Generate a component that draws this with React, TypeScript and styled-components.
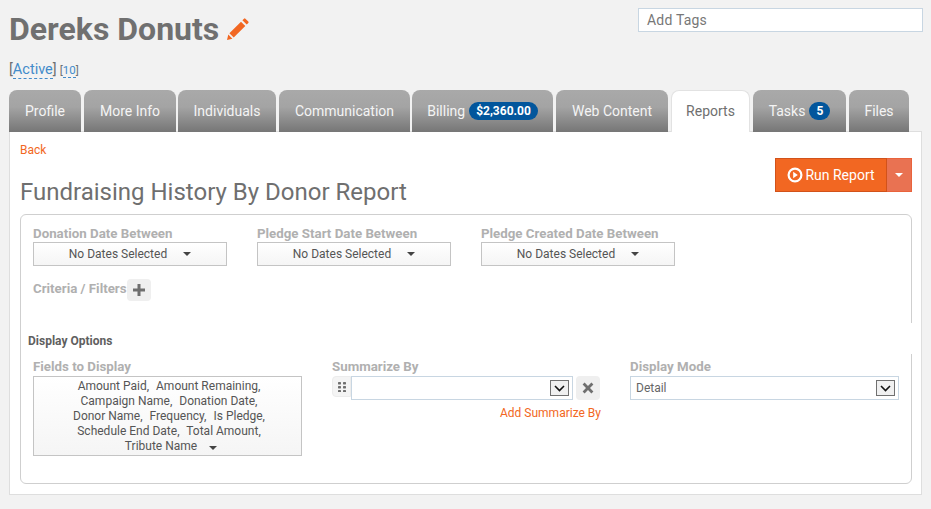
import React from 'react';
import styled, {createGlobalStyle} from 'styled-components';

const GlobalStyle = createGlobalStyle`
    html, body {
        margin: 0;
        height: 100%;
        background: #f2f2f2;
        font-family: Roboto, "Liberation Sans", sans-serif;
        color: #6f6f6f;
        overflow: hidden;
    }
    * {
        box-sizing: border-box;
    }
`;

const Page = styled.div`
    width: 931px;
    height: 509px;
    padding: 0 9px;
`;

const Header = styled.div`
    display: flex;
    justify-content: space-between;
    align-items: flex-start;
    width: 914px;
    height: 90px;
`;

const TitleBlock = styled.div`
    display: flex;
    flex-direction: column;
`;

const TitleRow = styled.div`
    display: flex;
    align-items: center;
    gap: 8px;
    margin-top: 11px;
    height: 36px;
`;

const Title = styled.h1`
    margin: 0;
    font-size: 32px;
    line-height: 36px;
    font-weight: 700;
    color: #707070;
`;

const StatusRow = styled.div`
    margin-top: 14px;
    line-height: 18px;
    color: #6f6f6f;
    display: flex;
    align-items: baseline;
    gap: 3px;
`;

const StatusLink = styled.span<{$small?: boolean}>`
    color: #428bca;
    font-size: ${p => p.$small ? "11.5px" : "14.5px"};
    border-bottom: 1px dashed #428bca;
`;

const Bracketed = styled.span<{$small?: boolean}>`
    font-size: ${p => p.$small ? "11.5px" : "14.5px"};
`;

const TagInput = styled.div`
    width: 285px;
    height: 24px;
    margin-top: 8px;
    padding-left: 8px;
    background: #fff;
    border: 1px solid #c8d6e2;
    font-size: 14px;
    line-height: 22px;
    letter-spacing: 0.2px;
    color: #777;
`;

const TabBar = styled.div`
    display: flex;
    height: 42px;
`;

const Tab = styled.div<{$active?: boolean; $width: number; $gap: number}>`
    width: ${p => p.$width}px;
    margin-right: ${p => p.$gap}px;
    display: flex;
    align-items: center;
    justify-content: center;
    gap: 4px;
    padding-bottom: 1px;
    font-size: 14px;
    border-radius: 8px 8px 0 0;
    color: ${p => p.$active ? "#6f6f6f" : "#f4f4f4"};
    background: ${p => p.$active ? "#fff" : "linear-gradient(#a9a9a9 0%, #a4a4a4 40%, #767676 100%)"};
    ${p => p.$active && `
        border: 1px solid #e2e2e2;
        border-bottom: none;
        position: relative;
        z-index: 1;
    `}
`;

const Badge = styled.span`
    background: #02569c;
    color: #fff;
    font-size: 12px;
    font-weight: 700;
    line-height: 18px;
    height: 18px;
    border-radius: 9px;
    padding: 0 7px;
`;

const Panel = styled.div`
    width: 913px;
    height: 364px;
    margin-top: -1px;
    background: #fff;
    border: 1px solid #dedede;
    padding: 11px 9px 0 10px;
`;

const BackLink = styled.div`
    font-size: 12px;
    line-height: 14px;
    color: #f26722;
`;

const TitleLine = styled.div`
    display: flex;
    justify-content: space-between;
    align-items: flex-start;
    height: 57px;
`;

const ReportTitle = styled.h2`
    margin: 20px 0 0 0;
    font-size: 24px;
    line-height: 30px;
    font-weight: 400;
    color: #6f6f6f;
`;

const SplitButton = styled.div`
    display: flex;
    height: 34px;
    margin-top: 1px;
`;

const RunButton = styled.div`
    width: 112px;
    background: #f26722;
    border: 1px solid #d2521a;
    color: #fff;
    font-size: 14px;
    display: flex;
    align-items: center;
    justify-content: center;
    gap: 2px;
`;

const CaretButton = styled.div`
    width: 25px;
    background: #e97252;
    border: 1px solid #e9633c;
    border-left: none;
    display: flex;
    align-items: center;
    justify-content: center;
`;

const Caret = styled.span<{$color?: string}>`
    display: inline-block;
    width: 0;
    height: 0;
    border-left: 4px solid transparent;
    border-right: 4px solid transparent;
    border-top: 4px solid ${p => p.$color || "#444"};
`;

const OptionsCard = styled.div`
    height: 270px;
    border: 1px solid #cfcfcf;
    border-radius: 6px;
    padding-top: 11px;
    display: flex;
    flex-direction: column;
`;

const DateRow = styled.div`
    display: flex;
    gap: 30px;
    padding-left: 12px;
`;

const Field = styled.div<{$width: number}>`
    width: ${p => p.$width}px;
`;

const Label = styled.div`
    font-size: 13.3px;
    line-height: 16px;
    font-weight: 700;
    color: #b0b0b0;
`;

const DropButton = styled.div`
    height: 24px;
    display: flex;
    align-items: center;
    justify-content: center;
    gap: 16px;
    border: 1px solid #c4c4c4;
    background: linear-gradient(#fff, #f5f5f5);
    font-size: 12px;
    color: #555;
`;

const CriteriaRow = styled.div`
    display: flex;
    align-items: flex-start;
    padding-left: 12px;
    margin-top: 13px;
    height: 44px;
`;

const CriteriaLabel = styled(Label)`
    margin-top: 2px;
`;

const PlusButton = styled.div`
    width: 24px;
    height: 22px;
    border-radius: 4px;
    background: #efefef;
    display: flex;
    align-items: center;
    justify-content: center;
`;

// white strip breaks the card's right border, same as the original markup
const DisplayHeader = styled.div`
    height: 31px;
    margin: 0 -1px 0 0;
    padding: 11px 0 0 7px;
    background: #fff;
    font-size: 12px;
    line-height: 14px;
    font-weight: 700;
    color: #5f5f5f;
    position: relative;
`;

const DisplayRow = styled.div`
    display: flex;
    padding-left: 12px;
    margin-top: 5px;
`;

const FieldsColumn = styled.div`
    width: 299px;
`;

const SummarizeColumn = styled.div`
    width: 298px;
`;

const ModeColumn = styled.div`
    width: 269px;
`;

const FieldsButton = styled.div`
    width: 269px;
    height: 80px;
    margin-top: 1px;
    border: 1px solid #c4c4c4;
    background: linear-gradient(#fff, #f5f5f5);
    font-size: 12px;
    line-height: 15px;
    text-align: center;
    color: #555;
    padding: 2px 25px 0 32px;
`;

const FieldName = styled.span`
    white-space: nowrap;
    margin-right: 4px;
`;

const CaretGap = styled.span`
    display: inline-block;
    margin-left: 5px;
    vertical-align: middle;
`;

const SummarizeRow = styled.div`
    display: flex;
    align-items: flex-start;
    margin-top: 1px;
`;

const HandleButton = styled.div`
    width: 19px;
    height: 21px;
    border: 1px solid #ececec;
    border-radius: 4px 0 0 4px;
    background: #f4f4f4;
    display: flex;
    align-items: center;
    justify-content: center;
`;

const SelectBox = styled.div<{$width: number; $top?: number}>`
    width: ${p => p.$width}px;
    height: 24px;
    margin-top: ${p => p.$top || 0}px;
    border: 1px solid #c8d6e2;
    background: #fff;
    display: flex;
    align-items: center;
    justify-content: space-between;
    padding: 0 3px 0 5px;
    font-size: 12px;
    color: #666;
`;

const SelectArrow = styled.div`
    width: 19px;
    height: 16px;
    border: 1px solid #707070;
    background: #f0f0f0;
    display: flex;
    align-items: center;
    justify-content: center;
`;

const ClearButton = styled.div`
    width: 24px;
    height: 24px;
    margin-left: 3px;
    border-radius: 4px;
    background: #efefef;
    display: flex;
    align-items: center;
    justify-content: center;
`;

const AddLink = styled.div`
    width: 269px;
    margin-top: 6px;
    text-align: right;
    font-size: 12px;
    line-height: 14px;
    color: #f26722;
`;

const Chevron = () => (
    <svg width="11" height="7" viewBox="0 0 11 7">
        <path d="M1 1l4.5 4.5L10 1" fill="none" stroke="#111" strokeWidth="1.6"/>
    </svg>
);

const Pencil = () => (
    <svg width="22" height="22" viewBox="0 0 22 22">
        <path fill="#f26722" d="M0 22l1.3-5.4 4.1 4.1zM2.4 15.3L14 3.7l4.3 4.3L6.7 19.6zM15.4 2.3L17 .7a1 1 0 0 1 1.4 0l2.9 2.9a1 1 0 0 1 0 1.4l-1.6 1.6z"/>
    </svg>
);

const PlayCircle = () => (
    <svg width="16" height="16" viewBox="0 0 16 16">
        <circle cx="8" cy="8" r="6.4" fill="none" stroke="#fff" strokeWidth="2.2"/>
        <path fill="#fff" d="M6.2 4.8l4.6 3.2-4.6 3.2z"/>
    </svg>
);

const Plus = () => (
    <svg width="12" height="12" viewBox="0 0 12 12">
        <path fill="#6f6f6f" d="M4.5 0h3v4.5H12v3H7.5V12h-3V7.5H0v-3h4.5z"/>
    </svg>
);

const Cross = () => (
    <svg width="12" height="12" viewBox="0 0 12 12">
        <path fill="#6f6f6f" d="M2.6.6L6 4l3.4-3.4 2 2L8 6l3.4 3.4-2 2L6 8l-3.4 3.4-2-2L4 6 .6 2.6z"/>
    </svg>
);

const Grip = () => (
    <svg width="8" height="10" viewBox="0 0 8 10">
        {[0, 4, 8].map(y => [0, 5].map(x => (
            <rect key={`${x}-${y}`} x={x} y={y} width="3" height="2.4" rx="0.6" fill="#6f6f6f"/>
        )))}
    </svg>
);

const tabs = [
    {name: "Profile", width: 72, gap: 3},
    {name: "More Info", width: 92, gap: 2},
    {name: "Individuals", width: 98, gap: 3},
    {name: "Communication", width: 131, gap: 2},
    {name: "Billing", width: 141, gap: 3, badge: "$2,360.00"},
    {name: "Web Content", width: 112, gap: 3},
    {name: "Reports", width: 79, gap: 3, active: true},
    {name: "Tasks", width: 93, gap: 3, badge: "5"},
    {name: "Files", width: 60, gap: 0},
];

const dateFields = ["Donation Date Between", "Pledge Start Date Between", "Pledge Created Date Between"];

const displayFields = [
    "Amount Paid,", "Amount Remaining,", "Campaign Name,", "Donation Date,", "Donor Name,",
    "Frequency,", "Is Pledge,", "Schedule End Date,", "Total Amount,", "Tribute Name",
];

export default function App() {
    return (
        <Page>
            <GlobalStyle/>
            <Header>
                <TitleBlock>
                    <TitleRow>
                        <Title>Dereks Donuts</Title>
                        <Pencil/>
                    </TitleRow>
                    <StatusRow>
                        <Bracketed>[<StatusLink>Active</StatusLink>]</Bracketed>
                        <Bracketed $small>[<StatusLink $small>10</StatusLink>]</Bracketed>
                    </StatusRow>
                </TitleBlock>
                <TagInput>Add Tags</TagInput>
            </Header>
            <TabBar>
                {tabs.map(tab => (
                    <Tab key={tab.name} $active={tab.active} $width={tab.width} $gap={tab.gap}>
                        {tab.name}
                        {tab.badge && <Badge>{tab.badge}</Badge>}
                    </Tab>
                ))}
            </TabBar>
            <Panel>
                <BackLink>Back</BackLink>
                <TitleLine>
                    <ReportTitle>Fundraising History By Donor Report</ReportTitle>
                    <SplitButton>
                        <RunButton><PlayCircle/>Run Report</RunButton>
                        <CaretButton><Caret $color="#fff"/></CaretButton>
                    </SplitButton>
                </TitleLine>
                <OptionsCard>
                    <DateRow>
                        {dateFields.map(label => (
                            <Field key={label} $width={194}>
                                <Label>{label}</Label>
                                <DropButton>No Dates Selected <Caret/></DropButton>
                            </Field>
                        ))}
                    </DateRow>
                    <CriteriaRow>
                        <CriteriaLabel>Criteria / Filters</CriteriaLabel>
                        <PlusButton><Plus/></PlusButton>
                    </CriteriaRow>
                    <DisplayHeader>Display Options</DisplayHeader>
                    <DisplayRow>
                        <FieldsColumn>
                            <Label>Fields to Display</Label>
                            <FieldsButton>
                                {displayFields.map(name => (
                                    <React.Fragment key={name}>
                                        <FieldName>{name}</FieldName>{" "}
                                    </React.Fragment>
                                ))}
                                <CaretGap><Caret/></CaretGap>
                            </FieldsButton>
                        </FieldsColumn>
                        <SummarizeColumn>
                            <Label>Summarize By</Label>
                            <SummarizeRow>
                                <HandleButton><Grip/></HandleButton>
                                <SelectBox $width={222}>
                                    <span/>
                                    <SelectArrow><Chevron/></SelectArrow>
                                </SelectBox>
                                <ClearButton><Cross/></ClearButton>
                            </SummarizeRow>
                            <AddLink>Add Summarize By</AddLink>
                        </SummarizeColumn>
                        <ModeColumn>
                            <Label>Display Mode</Label>
                            <SelectBox $width={269} $top={1}>
                                <span>Detail</span>
                                <SelectArrow><Chevron/></SelectArrow>
                            </SelectBox>
                        </ModeColumn>
                    </DisplayRow>
                </OptionsCard>
            </Panel>
        </Page>
    );
}
